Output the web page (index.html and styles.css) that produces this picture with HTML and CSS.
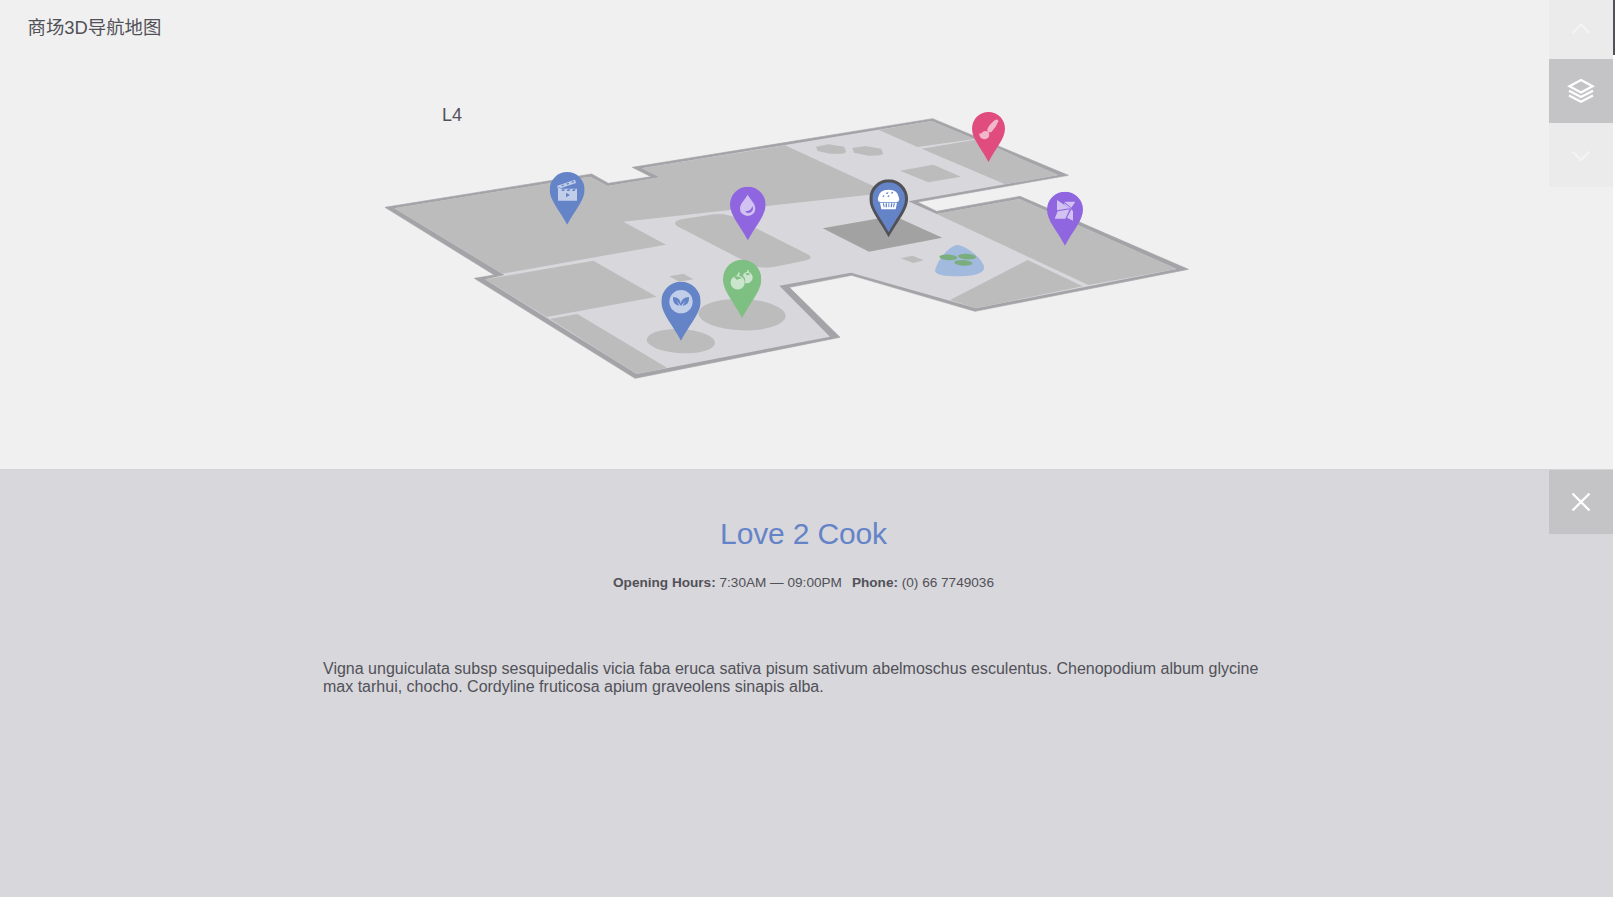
FILE: index.html
```html
<!DOCTYPE html>
<html lang="zh">
<head>
<meta charset="utf-8">
<title>商场3D导航地图</title>
<link rel="stylesheet" href="styles.css">
</head>
<body>
<div class="page">
<main class="main">
  <section class="mall">
    <h1 class="heading">商场3D导航地图</h1>
    <div class="level">
      <span class="level-name">L4</span>
      <svg class="map" viewBox="0 0 2520 900">
        <defs>
          <symbol id="pin" viewBox="0 0 105 158" preserveAspectRatio="none">
            <path d="M52.5 158C28 112 0 85 0 52.5A52.5 52.5 0 0 1 105 52.5C105 85 77 112 52.5 158Z"/>
          </symbol>
        </defs>
        <polygon class="outline" points="30,352 650,252 700,280 828,260 772,232 1673,86 2080,256 1627,336 1685,364 1935,319 2440,538 1800,664 1430,556 1243,592 1395,742 785,864 780,865 298,565 358,555"/>
        <polygon class="ground" points="58,355 645,260 698,288 855,262 800,235 1670,93 2050,255 1600,334 1685,372 1933,327 2405,537 1803,655 1428,548 1213,587 1365,740 785,852 330,568 388,555"/>
        <g class="space">
          <polygon points="58,355 645,260 698,288 855,262 800,235 1230,166 1539,308 745,395 873,464 382,551"/>
          <polygon points="395,557 655,512 845,620 515,681 330,568"/>
          <polygon points="525,687 607,672 876,833 785,852"/>
          <path transform="translate(735 120)" d="M172 289C160 281 164 272 184 268L272 254Q308 249 334 258L566 374Q582 386 554 392L464 410Q424 416 402 408Z"/>
          <ellipse cx="1101" cy="674" rx="131" ry="47" transform="rotate(2 1101 674)"/>
          <ellipse cx="917.500" cy="753.500" rx="102.500" ry="36" transform="rotate(3 917 753)"/>
          <polygon points="883,559 925,551 955,568 913,575"/>
          <g transform="translate(1215 30)">
            <polygon points="108,140 145,133 192,140 199,156 188,161 150,161 113,153"/>
            <polygon points="217,144 257,138 303,146 310,161 300,166 265,167 222,158"/>
            <polygon points="360,212 460,194 543,230 445,247"/>
            <polygon points="297,90 455,63 585,117 412,141"/>
            <polygon points="425,146 595,118 835,225 675,253"/>
            <polygon class="active" points="128,385 341,347 487,413 267,455"/>
            <polygon points="470,342 718,297 1190,507 925,555"/>
            <polygon points="743,480 908,559 588,625 510,600"/>
            <polygon points="362,475 398,467 431,481 400,489"/>
            <path class="pond" d="M465 513C468 487 507 436 533 435C565 440 615 483 612 505C609 525 567 529 532 529C500 528 467 526 465 513Z"/>
            <g class="lily">
              <ellipse cx="505" cy="472" rx="27" ry="8.500" transform="rotate(4 505 472)"/>
              <ellipse cx="561" cy="470" rx="27" ry="8.500" transform="rotate(4 561 470)"/>
              <ellipse cx="550" cy="488.500" rx="27" ry="8.500" transform="rotate(4 550 488)"/>
            </g>
          </g>
        </g>

        <!-- cinema -->
        <use class="blue" href="#pin" x="524" y="246" width="105" height="158"/>
        <g class="icon">
          <path fill-rule="evenodd" d="M549 296H606V332H549ZM573 308V322L585 315ZM562 298L559 303H567L570 298ZM578 298L575 303H583L586 298ZM594 298L591 303H599L602 298Z"/>
          <path fill-rule="evenodd" d="M547 287L600 269L603 279L556 295L554 300Q546 297 547 287ZM558 287L564 289L568 284L563 284ZM573 282L579 284L583 279L578 279ZM588 277L594 279L598 274L593 274ZM550 291L551 295L555 292Z"/>
        </g>

        <!-- water bar -->
        <use class="purple" href="#pin" x="1065" y="290" width="107" height="161"/>
        <path class="icon" fill-rule="evenodd" transform="translate(735 120)" d="M383 194C375 209 360 220 360 236A23 22 0 0 0 406 236C406 220 391 209 383 194ZM397 228Q405 244 386 250Q378 249 375 244Q394 244 397 228Z"/>

        <!-- salad bar -->
        <use class="blue" href="#pin" x="859" y="575" width="118" height="177"/>
        <g transform="translate(795 480)">
          <circle class="icon" cx="123" cy="155" r="35"/>
          <path class="blue" d="M99 141Q121 142 122 161Q125 142 147 141Q150 164 128 167L135 153L123 168L111 153L118 167Q96 164 99 141Z"/>
        </g>

        <!-- greengrocer -->
        <use class="green" href="#pin" x="1044" y="509" width="115" height="175"/>
        <g class="icon" transform="translate(795 480)">
          <path fill-rule="evenodd" d="M292 76L295 67L300 69L297 77A21 21 0 1 1 289 77ZM280 82L287 85L291 90L297 86L306 85L300 81L295 80L287 79Z"/>
          <path fill-rule="evenodd" d="M321 66L323 59L327 61L326 66A17 17 0 1 1 315 99Q318 84 309 77Q310 68 321 66ZM315 71L322 76L331 73L325 69Z"/>
        </g>

        <!-- art supplies -->
        <use class="pink" href="#pin" x="1791" y="66" width="99" height="150"/>
        <g class="icon" transform="translate(1215 30)">
          <path d="M622 88Q627 74 645 60Q655 55 655 64Q650 80 635 95Q629 99 623 95Z"/>
          <path d="M597 100Q603 104 607 97Q616 89 626 97Q632 112 618 117Q600 121 597 100Z"/>
        </g>

        <!-- paper crafts -->
        <use class="purple" href="#pin" x="2016" y="305" width="108" height="162"/>
        <g class="icon" transform="translate(1635 30)">
          <path d="M411 300L448 325L411 331ZM433 305H466L454 323ZM413 334L449 328L436 356H404ZM454 328L459 333V362L441 353Z"/>
          <path d="M432 308L453 325L450 326L434 315Z"/>
        </g>

        <!-- selected shop -->
        <use class="dark" href="#pin" x="1483" y="268" width="116" height="174"/>
        <use class="blue" href="#pin" x="1492" y="277" width="98" height="150"/>
        <g class="selected-icon" transform="translate(1215 30)">
          <path fill-rule="evenodd" d="M299 306Q292 303 294 294Q297 269 326 269Q354 269 357 294Q359 303 352 306ZM307 290L311 291L314 287L310 286ZM317 281L322 282L326 278L321 277ZM322 290L326 291L329 287L325 286ZM333 280L337 281L340 276L336 275Z"/>
          <path fill-rule="evenodd" d="M300 308H351L347 328H304ZM308 310L311 322H314L312 310ZM317 310V322H321V310ZM325 310V322H328V310ZM333 310L332 322H336L337 310ZM341 310L339 322H342L345 310Z"/>
        </g>
      </svg>
    </div>
    <nav class="levels">
      <button class="button faded" aria-label="Up"><svg viewBox="0 0 64 64"><path d="M23.500 38L32 29.500L40.500 38"/></svg></button>
      <button class="button" aria-label="All levels"><svg viewBox="0 0 64 64"><path d="M20.500 27.200L32 21L43.500 27.200L32 33.400ZM20 31.800L32 38L44 31.800M20 36.600L32 42.800L44 36.600"/></svg></button>
      <button class="button faded" aria-label="Down"><svg viewBox="0 0 64 64"><path d="M23.500 28.500L32 37L40.500 28.500"/></svg></button>
    </nav>
  </section>
  <section class="content">
    <article class="item">
      <h2 class="item-title">Love 2 Cook</h2>
      <p class="meta"><span><b>Opening Hours:</b> 7:30AM — 09:00PM</span><span><b>Phone:</b> (0) 66 7749036</span></p>
      <p class="description">Vigna unguiculata subsp sesquipedalis vicia faba eruca sativa pisum sativum abelmoschus esculentus. Chenopodium album glycine max tarhui, chocho. Cordyline fruticosa apium graveolens sinapis alba.</p>
    </article>
    <button class="button close" aria-label="Close"><svg viewBox="0 0 64 64"><path d="M23.500 23.500L40.500 40.500M40.500 23.500L23.500 40.500"/></svg></button>
  </section>
</main>
<div class="scroll-track"><div class="scroll-thumb"></div></div>
</div>
</body>
</html>
```

FILE: styles.css
```css
* { box-sizing: border-box; }
body {
  margin: 0;
  overflow: hidden;
  color: #515158;
  background: #fff;
  font-family: "Liberation Sans", "Noto Sans CJK SC", sans-serif;
}
h1, h2, p { margin: 0; font-weight: 400; }
.page { display: flex; height: 897px; }
.main { width: 1613px; display: flex; flex-direction: column; }
.mall {
  height: 469px;
  display: grid;
  grid-template-columns: 375px 840px 1fr;
  background: #f0f0f0;
}
.heading { padding: 14px 0 0 27.5px; font-size: 18.400px; line-height: 27px; white-space: nowrap; }
.level { display: flex; flex-direction: column; padding-top: 90px; position: relative; }
.level-name { position: absolute; left: 67px; top: 105px; font-size: 18px; line-height: 21px; }
.map { width: 840px; height: 300px; display: block; }
.outline { fill: #a4a3a8; stroke: #a4a3a8; stroke-width: 2; }
.ground { fill: #d8d7dc; }
.space { fill: #bcbcbc; }
.active { fill: #a2a2a2; }
.pond { fill: #a2badd; }
.lily { fill: #7bae7f; }
.blue { fill: #6584c8; }
.purple { fill: #8f66e0; }
.green { fill: #7dc081; }
.pink { fill: #df4c7d; }
.dark { fill: #515158; }
.icon { fill: #fff; opacity: .6; }
.selected-icon { fill: #fff; }
.levels { justify-self: end; display: flex; flex-direction: column; margin-top: -5px; }
.button {
  width: 64px;
  height: 64px;
  flex: none;
  padding: 0;
  border: 0;
  background: #c4c4c6;
}
.button svg { display: block; width: 64px; height: 64px; fill: none; stroke: #fff; stroke-width: 2.300; }
.faded { background: #ebebeb; }
.faded svg { stroke: #f3f3f3; }
.content {
  flex: 1;
  display: flex;
  justify-content: space-between;
  padding-left: 323px;
  border-top: 1px solid #d3d3d5;
  background: #d8d7dc;
}
.item { width: 961px; padding-top: 46px; }
.item-title { color: #6584c8; font-size: 30px; line-height: 35px; letter-spacing: -.15px; text-align: center; }
.meta { display: flex; justify-content: center; gap: 10px; padding-top: 24px; font-size: 13.600px; line-height: 16px; }
.description { padding-top: 69px; font-size: 16px; line-height: 18px; }
.scroll-track { flex: 1; background: #fff; }
.scroll-thumb { height: 55px; background: #515158; }
```
